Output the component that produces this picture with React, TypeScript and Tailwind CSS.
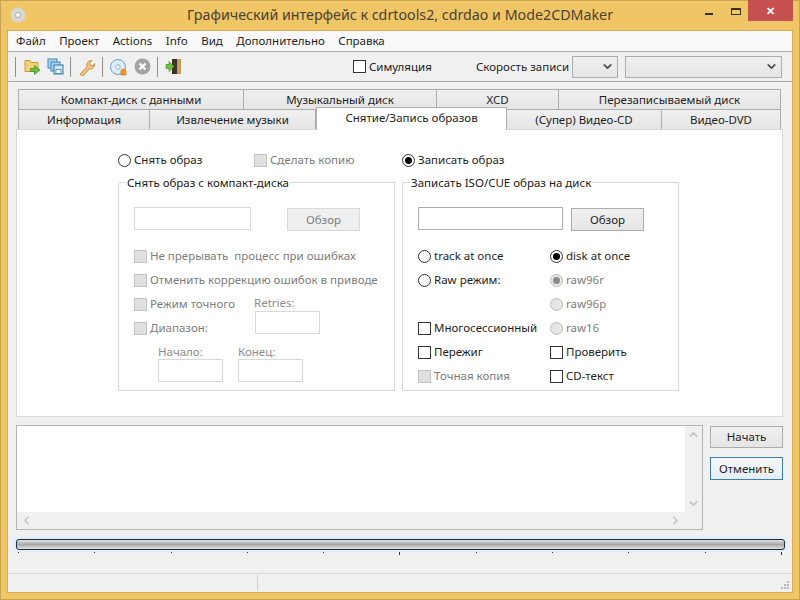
import { ChevronDown, ChevronLeft, ChevronRight, ChevronUp } from "lucide-react";

const topTabs = [
  { label: "Компакт-диск с данными", w: "w-[226px]" },
  { label: "Музыкальный диск", w: "w-[193px]" },
  { label: "XCD", w: "w-[122px]" },
  { label: "Перезаписываемый диск", w: "w-[222px]" },
];

const menu = ["Файл", "Проект", "Actions", "Info", "Вид", "Дополнительно", "Справка"];

function Radio({ label, checked, off, w }: { label: string; checked?: boolean; off?: boolean; w?: string }) {
  return (
    <div className={`flex h-6 items-center ${w ?? ""}`}>
      <span className={`flex h-[13px] w-[13px] shrink-0 items-center justify-center rounded-full border ${off ? "border-[#bcbcbc] bg-[#e6e6e6]" : "border-[#333] bg-white"}`}>
        {checked && <span className={`h-[7px] w-[7px] rounded-full ${off ? "bg-[#8a8a8a]" : "bg-black"}`} />}
      </span>
      <span className={`ml-[3px] whitespace-nowrap ${off ? "text-[#7d7d7d]" : ""}`}>{label}</span>
    </div>
  );
}

function Check({ label, off, w }: { label: string; off?: boolean; w?: string }) {
  return (
    <div className={`flex h-6 items-center ${w ?? ""}`}>
      <span className={`h-[13px] w-[13px] shrink-0 border ${off ? "border-[#c4c4c4] bg-[#e0e0e0]" : "border-[#333] bg-white"}`} />
      <span className={`ml-[3px] whitespace-pre ${off ? "text-[#7d7d7d]" : ""}`}>{label}</span>
    </div>
  );
}

function Field({ w, off }: { w: string; off?: boolean }) {
  return <div className={`h-[23px] border bg-white ${w} ${off ? "border-[#d9d9d9]" : "border-[#acacac]"}`} />;
}

function Group({ title, children }: { title: string; children: React.ReactNode }) {
  return (
    <div className="relative h-[209px] w-[277px] border border-[#d9d9d9] pl-[15px] pt-[24px]">
      <span className="absolute left-[7px] top-[-8px] bg-white px-px leading-[15px] text-[#1a1a1a]">{title}</span>
      {children}
    </div>
  );
}

function Toolbar() {
  const sep = <span className="mx-[6px] h-[20px] w-px bg-[#8f8f8f]" />;
  return (
    <div className="flex h-[30px] items-center border-b border-[#a8a8a8] bg-[#f0f0f0] pl-[7px]">
      <span className="mr-[8px] h-[20px] w-px bg-[#8f8f8f]" />
      <svg width="17" height="17" viewBox="0 0 17 17" className="mr-[6px]">
        <path d="M1 2.500h5l1 2h7v9H1z" fill="#f3cf76" stroke="#c79a3c" />
        <path d="M6.500 10.500h4V7.500l5.500 4.500-5.500 4.500v-3h-4z" fill="#6cc03c" stroke="#3c8a1e" strokeWidth="0.7" />
      </svg>
      <svg width="17" height="17" viewBox="0 0 17 17">
        <rect x="1" y="1" width="9" height="9" fill="#a9d3ef" stroke="#3f86bd" />
        <rect x="4" y="4" width="9" height="9" fill="#a9d3ef" stroke="#3f86bd" />
        <rect x="7" y="7" width="9" height="9" fill="#cfe6f6" stroke="#2f76ad" />
        <rect x="9" y="11.500" width="5" height="4" fill="#fff" stroke="#2f76ad" strokeWidth="0.7" />
      </svg>
      {sep}
      <svg width="17" height="18" viewBox="0 0 17 18" className="ml-px mr-px">
        <path d="M2 16.500 9 8.500c-1-3 1-6.500 5-6l-2.500 2.500 1 2.500 2.500.5 1.500-2.500c.5 4-2.500 6-5.500 5.500l-6 7z" fill="#f3c27c" stroke="#c08a3e" strokeWidth="0.9" />
      </svg>
      {sep}
      <svg width="20" height="18" viewBox="0 0 20 18" className="mr-[5px]">
        <circle cx="9" cy="9" r="7.500" fill="#dcecf8" stroke="#6f9fc6" />
        <circle cx="9" cy="9" r="2.200" fill="#fff" stroke="#8fa9bf" />
        <path d="M12 17v-3.500a2.500 2.500 0 0 1 5 0V17z" fill="#f09a24" stroke="#cf7d12" strokeWidth="0.7" />
      </svg>
      <svg width="17" height="17" viewBox="0 0 17 17">
        <circle cx="8.500" cy="8.500" r="8" fill="#a3a3a3" />
        <path d="m5.500 5.500 6 6m0-6-6 6" stroke="#fff" strokeWidth="2.300" />
      </svg>
      <span className="ml-[6px] mr-[7px] h-[20px] w-px bg-[#8f8f8f]" />
      <svg width="17" height="17" viewBox="0 0 17 17">
        <rect x="8" y="1" width="8" height="15" fill="#c89a5a" />
        <rect x="7" y="1" width="5" height="15" fill="#3a3226" />
        <path d="M1 6.500h3V3.500l5 5-5 5v-3H1z" fill="#6cc03c" stroke="#3c8a1e" strokeWidth="0.6" />
      </svg>
      <span className="ml-[171px] h-[13px] w-[13px] border border-[#333] bg-white" />
      <span className="ml-[3px] w-[107px]">Симуляция</span>
      <span className="w-[96px] whitespace-nowrap">Скорость записи</span>
      <div className="flex h-[22px] w-[46px] items-center justify-end border border-[#acacac] bg-gradient-to-b from-[#f0f0f0] to-[#e5e5e5] pr-[3px]">
        <ChevronDown size={13} strokeWidth={3} className="text-[#4a4a4a]" />
      </div>
      <div className="ml-[7px] flex h-[22px] w-[157px] items-center justify-end border border-[#acacac] bg-gradient-to-b from-[#f0f0f0] to-[#e5e5e5] pr-[3px]">
        <ChevronDown size={13} strokeWidth={3} className="text-[#4a4a4a]" />
      </div>
    </div>
  );
}

function Tabs() {
  const base = "flex h-5 items-center justify-center border-r border-t border-[#acacac] bg-gradient-to-b from-[#f0f0f0] to-[#e5e5e5]";
  return (
    <div className="ml-[2px] mt-[7px] flex flex-col">
      <div className="flex">
        {topTabs.map((t, i) => (
          <div key={t.label} className={`${base} ${t.w} ${i === 0 ? "border-l" : ""}`}>{t.label}</div>
        ))}
      </div>
      <div className="flex">
        <div className={`${base} w-[132px] border-l`}>Информация</div>
        <div className={`${base} w-[166px]`}>Извлечение музыки</div>
        <div className="relative z-10 mb-[-1px] mt-[-2px] flex h-[23px] w-[191px] items-center justify-center border-x border-t border-[#acacac] bg-white pb-[2px]">Снятие/Запись образов</div>
        <div className={`${base} w-[155px]`}>(Супер) Видео-CD</div>
        <div className={`${base} w-[119px]`}>Видео-DVD</div>
      </div>
    </div>
  );
}

function Panel() {
  return (
    <div className="h-[288px] border border-[#d9d9d9] bg-white pl-[101px] pt-[18px]">
      <div className="flex items-center">
        <Radio label="Снять образ" w="w-[136px]" />
        <Check label="Сделать копию" off w="w-[148px]" />
        <Radio label="Записать образ" checked />
      </div>
      <div className="mt-[10px] flex gap-[7px]">
        <Group title="Снять образ с компакт-диска">
          <div className="flex items-end">
            <Field w="w-[117px]" off />
            <div className="ml-[36px] mb-[-1px] flex h-[23px] w-[73px] items-center justify-center border border-[#d9d9d9] bg-[#efefef] text-[#7d7d7d]">Обзор</div>
          </div>
          <div className="mt-[14px]">
            <Check label="Не прерывать  процесс при ошибках" off />
            <Check label="Отменить коррекцию ошибок в приводе" off />
          </div>
          <div className="flex">
            <div className="w-[120px]">
              <Check label="Режим точного" off />
              <Check label="Диапазон:" off />
            </div>
            <div className="pt-[3px]">
              <div className="h-[16px] leading-[15px] text-[#8c8c8c]">Retries:</div>
              <Field w="ml-px w-[65px]" off />
            </div>
          </div>
          <div className="ml-[24px] mt-[4px] flex gap-[15px]">
            <div>
              <div className="h-[15px] leading-[15px] text-[#8c8c8c]">Начало:</div>
              <Field w="w-[65px]" off />
            </div>
            <div>
              <div className="h-[15px] leading-[15px] text-[#8c8c8c]">Конец:</div>
              <Field w="w-[65px]" off />
            </div>
          </div>
        </Group>
        <Group title="Записать ISO/CUE образ на диск">
          <div className="flex items-end">
            <Field w="w-[145px]" />
            <div className="ml-[8px] mb-[-1px] flex h-[23px] w-[73px] items-center justify-center border border-[#acacac] bg-gradient-to-b from-[#f0f0f0] to-[#e5e5e5]">Обзор</div>
          </div>
          <div className="mt-[14px] flex">
            <div className="w-[132px]">
              <Radio label="track at once" />
              <Radio label="Raw режим:" />
              <div className="h-6" />
              <Check label="Многосессионный" />
              <Check label="Пережиг" />
              <Check label="Точная копия" off />
            </div>
            <div>
              <Radio label="disk at once" checked />
              <Radio label="raw96r" checked off />
              <Radio label="raw96p" off />
              <Radio label="raw16" off />
              <Check label="Проверить" />
              <Check label="CD-текст" />
            </div>
          </div>
        </Group>
      </div>
    </div>
  );
}

function LogRow() {
  return (
    <div className="mt-[8px] flex">
      <div className="flex h-[105px] w-[687px] flex-col border border-[#b4b4b4] bg-[#f0f0f0]">
        <div className="flex flex-1">
          <div className="flex-1 bg-white" />
          <div className="flex w-[17px] flex-col items-center justify-between py-[2px] text-[#c4c4c4]">
            <ChevronUp size={13} strokeWidth={3} />
            <ChevronDown size={13} strokeWidth={3} />
          </div>
        </div>
        <div className="flex h-[17px] items-center justify-between px-[3px] pr-[20px] text-[#c4c4c4]">
          <ChevronLeft size={13} strokeWidth={3} />
          <ChevronRight size={13} strokeWidth={3} />
        </div>
      </div>
      <div className="ml-[7px] flex w-[73px] flex-col gap-[9px] pt-px">
        <div className="flex h-[22px] items-center justify-center border border-[#acacac] bg-gradient-to-b from-[#f0f0f0] to-[#e5e5e5]">Начать</div>
        <div className="flex h-[23px] items-center justify-center border border-[#3c7fb1] bg-gradient-to-b from-[#f4f8fc] to-[#e6eef6]">Отменить</div>
      </div>
    </div>
  );
}

function Progress() {
  return (
    <div className="mt-[9px] w-[769px]">
      <div className="h-[11px] rounded-[3px] border border-[#12304a] bg-gradient-to-b from-[#e2e2e2] via-[#a8a8a8] to-[#e2e2e2] shadow-[0_0_4px_#cfe3f5]" />
      <div className="ml-[2px] mt-[2px] flex h-[3px] w-[764px] justify-between">
        {Array.from({ length: 11 }).map((_, i) => (
          <span key={i} className={`w-px bg-[#333] ${i === 5 || i === 10 ? "h-[3px]" : "h-px"}`} />
        ))}
      </div>
    </div>
  );
}

export default function App() {
  return (
    <div className="flex h-[600px] w-[800px] flex-col overflow-hidden bg-[#f0c566] font-['Noto_Sans',sans-serif] text-[11.5px] leading-4 text-[#1e1e1e] shadow-[inset_0_0_0_1px_#c9a452]">
      <div className="relative flex h-[31px] shrink-0 items-center justify-center pb-[1px] text-[14.25px] text-[#4a4232]">
        <svg width="16" height="16" viewBox="0 0 16 16" className="absolute left-[10px] top-[7px]">
          <circle cx="8" cy="8" r="7.500" fill="#d8d8d4" />
          <circle cx="8" cy="8" r="2.500" fill="#fff" stroke="#9a9a94" strokeWidth="0.8" />
        </svg>
        Графический интерфейс к cdrtools2, cdrdao и Mode2CDMaker
        <span className="absolute left-[705px] top-[13px] h-[2px] w-[8px] bg-[#3a3220]" />
        <span className="absolute left-[731px] top-[8px] h-[7px] w-[10px] border border-t-2 border-[#3a3220]" />
        <div className="absolute left-[748px] top-0 flex h-[21px] w-[45px] items-center justify-center bg-[#c75050] text-[11px] font-bold text-white">✕</div>
      </div>
      <div className="mx-[8px] mb-[8px] flex flex-1 flex-col bg-[#f0f0f0] shadow-[0_0_0_1px_#d5ac58]">
        <div className="flex h-[21px] shrink-0 items-center gap-[13.5px] border-b border-[#a8a8a8] bg-[#f9f9f9] pl-[8px]">
          {menu.map((m) => (
            <span key={m}>{m}</span>
          ))}
        </div>
        <Toolbar />
        <div className="flex flex-1 flex-col pl-[8px] pr-[9px]">
          <Tabs />
          <Panel />
          <LogRow />
          <Progress />
        </div>
        <div className="relative flex h-[19px] border-t border-[#d9d9d9]">
          <span className="ml-[249px] mt-[1px] h-[16px] w-px bg-[#d0d0d0]" />
          <svg width="10" height="10" viewBox="0 0 10 10" className="absolute bottom-[2px] right-[2px]">
            <path d="M7 1h2v2H7zM4 4h2v2H4zM7 4h2v2H7zM1 7h2v2H1zM4 7h2v2H4zM7 7h2v2H7z" fill="#b8b8b8" />
          </svg>
        </div>
      </div>
    </div>
  );
}
